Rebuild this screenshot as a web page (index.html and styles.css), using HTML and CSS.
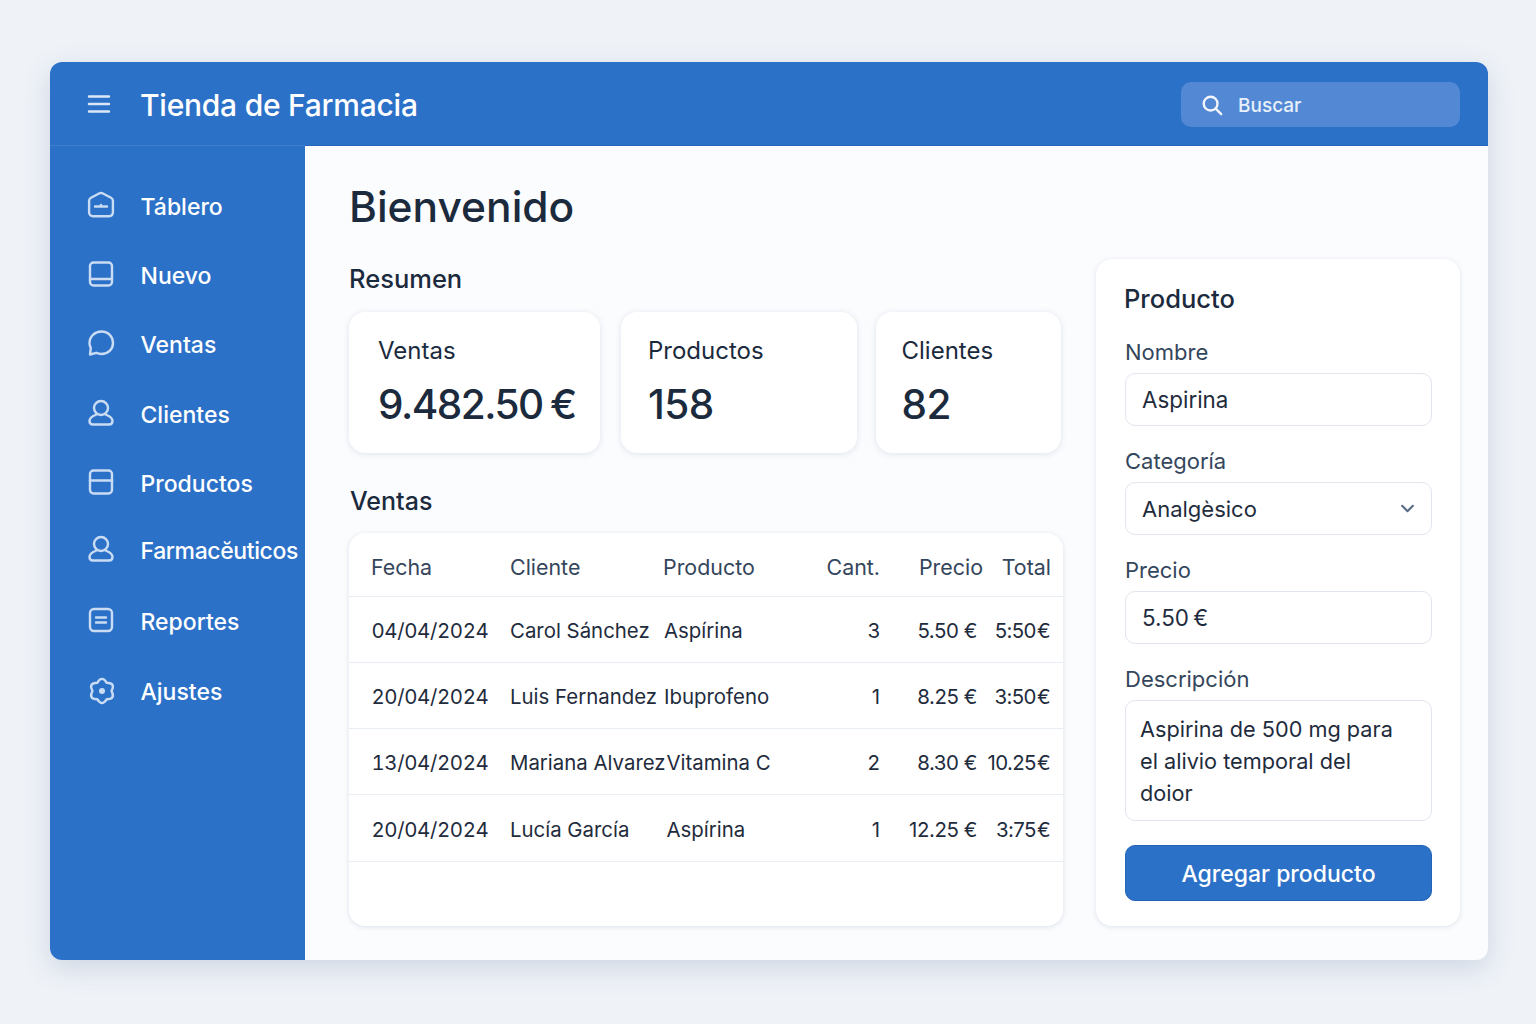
FILE: index.html
```html
<!DOCTYPE html>
<html lang="es">
<head>
    <meta charset="UTF-8">
    <meta name="viewport" content="width=device-width, initial-scale=1.0">
    <title>Tienda de Farmacia</title>
    <link rel="stylesheet" href="styles.css">
</head>
<body>

<div class="app">
    <header class="topbar">
        <svg class="menu-icon" viewBox="0 0 24 24"><path d="M2 4.500h20M2 12h20M2 19.500h20"/></svg>
        <h1>Tienda de Farmacia</h1>
        <div class="search">
            <svg class="search-icon" viewBox="0 0 24 24"><circle cx="10.500" cy="10.500" r="7.500"/><path d="M16 16l6 6"/></svg>
            <span>Buscar</span>
        </div>
    </header>

    <div class="layout">
        <nav class="sidebar">
            <a class="nav-item">
                <svg viewBox="0 0 28 28"><path d="M12.500 2.300c1-.5 2-.5 3 0l8.500 4.400c1.300.7 1.900 1.500 1.900 3v11.600c0 2.400-1.600 3.900-3.900 3.900H6c-2.300 0-3.900-1.500-3.900-3.900V9.700c0-1.500.6-2.300 1.900-3z"/><path d="M8 15.500h12M14 14v1.500"/></svg>
                <span>Táblero</span>
            </a>
            <a class="nav-item">
                <svg viewBox="0 0 28 28"><rect x="3" y="2.500" width="22" height="23" rx="3.500"/><path d="M3 19h22"/></svg>
                <span>Nuevo</span>
            </a>
            <a class="nav-item">
                <svg viewBox="0 0 28 28"><path d="M3 25.500l.8-6.500C2.800 17.400 2.500 15.700 2.500 14 2.500 7.500 7.700 2.500 14.500 2.500S26 7.500 26 14s-5 11-11.500 11c-2 0-3.700-.4-5.200-1.200z"/></svg>
                <span>Ventas</span>
            </a>
            <a class="nav-item">
                <svg viewBox="0 0 28 28"><circle cx="14" cy="9" r="7"/><path d="M9.500 15.500C5.500 17 2.500 19 2.500 22c0 2.300 1.500 3.500 3.500 3.500h16c2 0 3.500-1.200 3.500-3.500 0-3-3-5-7-6.500"/></svg>
                <span>Clientes</span>
            </a>
            <a class="nav-item">
                <svg viewBox="0 0 28 28"><rect x="3" y="2.500" width="22" height="23" rx="3.500"/><path d="M3 12.500h22"/></svg>
                <span>Productos</span>
            </a>
            <a class="nav-item nav-raised">
                <svg viewBox="0 0 28 28"><circle cx="14" cy="9" r="7"/><path d="M9.500 15.500C5.500 17 2.500 19 2.500 22c0 2.300 1.500 3.500 3.500 3.500h16c2 0 3.500-1.200 3.500-3.500 0-3-3-5-7-6.500"/></svg>
                <span class="long-label">Farmacĕuticos</span>
            </a>
            <a class="nav-item">
                <svg viewBox="0 0 28 28"><rect x="3" y="3" width="22" height="22" rx="4"/><path d="M9 11.500h10M9 16.500h10"/></svg>
                <span>Reportes</span>
            </a>
            <a class="nav-item">
                <svg class="gear" viewBox="0 0 28 28"><path d="M18.750 5.770Q14-2 9.250 5.770Q.14 6 4.500 14Q.14 22 9.250 22.230Q14 30 18.750 22.230Q27.860 22 23.500 14Q27.860 6 18.750 5.770z"/><circle class="dot" cx="14" cy="14" r="3"/></svg>
                <span>Ajustes</span>
            </a>
        </nav>

        <main class="content">
            <h2 class="page-title">Bienvenido</h2>

            <div class="columns">
                <div class="left-col">
                    <h3 class="section-title">Resumen</h3>
                    <div class="stats">
                        <div class="stat-card stat-sales">
                            <p>Ventas</p>
                            <strong>9.482.50 €</strong>
                        </div>
                        <div class="stat-card stat-products">
                            <p>Productos</p>
                            <strong>158</strong>
                        </div>
                        <div class="stat-card stat-clients">
                            <p>Clientes</p>
                            <strong>82</strong>
                        </div>
                    </div>

                    <h3 class="section-title sales-title">Ventas</h3>
                    <div class="table-card">
                        <table>
                            <thead>
                                <tr>
                                    <th class="col-date">Fecha</th>
                                    <th class="col-client">Cliente</th>
                                    <th class="col-product">Producto</th>
                                    <th class="col-qty num">Cant.</th>
                                    <th class="col-price num">Precio</th>
                                    <th class="col-total num">Total</th>
                                </tr>
                            </thead>
                            <tbody>
                                <tr>
                                    <td>04/04/2024</td>
                                    <td>Carol Sánchez</td>
                                    <td class="product">Aspírina</td>
                                    <td class="num">3</td>
                                    <td class="num price">5.50 €</td>
                                    <td class="num total">5:50 €</td>
                                </tr>
                                <tr>
                                    <td>20/04/2024</td>
                                    <td>Luis Fernandez</td>
                                    <td class="product">Ibuprofeno</td>
                                    <td class="num">1</td>
                                    <td class="num price">8.25 €</td>
                                    <td class="num total">3:50 €</td>
                                </tr>
                                <tr>
                                    <td>13/04/2024</td>
                                    <td>Mariana Alvarez</td>
                                    <td class="product shifted">Vitamina C</td>
                                    <td class="num">2</td>
                                    <td class="num price">8.30 €</td>
                                    <td class="num total">10.25 €</td>
                                </tr>
                                <tr>
                                    <td>20/04/2024</td>
                                    <td>Lucía García</td>
                                    <td class="product shifted">Aspírina</td>
                                    <td class="num">1</td>
                                    <td class="num price">12.25 €</td>
                                    <td class="num total">3:75 €</td>
                                </tr>
                            </tbody>
                        </table>
                    </div>
                </div>

                <form class="product-card">
                    <h3 class="section-title">Producto</h3>

                    <div class="field-label">Nombre</div>
                    <div class="field">Aspirina</div>

                    <div class="field-label">Categoría</div>
                    <div class="field field-select">
                        <span>Analgèsico</span>
                        <svg viewBox="0 0 14 14"><path d="M2 4.500l5 5 5-5"/></svg>
                    </div>

                    <div class="field-label">Precio</div>
                    <div class="field field-price">5.50 €</div>

                    <div class="field-label">Descripción</div>
                    <div class="field field-area">Aspirina de 500 mg para el alivio temporal del doior</div>

                    <button type="button">Agregar producto</button>
                </form>
            </div>
        </main>
    </div>
</div>

</body>
</html>
```

FILE: styles.css
```css
* {
    box-sizing: border-box;
}

body {
    margin: 0;
    height: 1024px;
    padding: 62px 48px 64px 50px;
    background-color: #eff3f8;
    font-family: Inter, "Noto Sans", sans-serif;
    color: #1b2a3d;
    overflow: hidden;
}

.app {
    height: 898px;
    display: flex;
    flex-direction: column;
    border-radius: 12px;
    overflow: hidden;
    background-color: #fbfcfe;
    box-shadow: 0 8px 28px rgba(60, 85, 125, 0.18);
}

/* top bar */
.topbar {
    flex: none;
    height: 84px;
    display: flex;
    align-items: center;
    padding: 0 28px 0 37px;
    background-color: #2c71c8;
    border-bottom: 1px solid #2765ba;
    color: #fff;
}

.menu-icon {
    width: 24px;
    height: 24px;
    fill: none;
    stroke: #dbe7f7;
    stroke-width: 2.400;
    stroke-linecap: round;
}

.topbar h1 {
    margin: 2px 0 0 29px;
    font-size: 30px;
    font-weight: 500;
    letter-spacing: -0.25px;
}

.search {
    margin: 2px 0 0 auto;
    width: 279px;
    height: 45px;
    display: flex;
    align-items: center;
    gap: 15px;
    padding-left: 20px;
    border-radius: 10px;
    background-color: #5288d4;
    font-size: 19px;
    font-weight: 500;
    color: #e8f0fa;
}

.search span {
    margin-top: 2px;
}

.search-icon {
    width: 22px;
    height: 22px;
    fill: none;
    stroke: #f2f6fc;
    stroke-width: 2.600;
    stroke-linecap: round;
}

.layout {
    flex: 1;
    display: flex;
    min-height: 0;
}

/* sidebar */
.sidebar {
    flex: none;
    width: 255px;
    margin-top: -1px;
    padding-top: 25px;
    background-color: #2c71c8;
    border-top: 1px solid #3f7fce;
}

.nav-item {
    height: 69.300px;
    display: flex;
    align-items: center;
    gap: 25.500px;
    padding-left: 37px;
    font-size: 23px;
    font-weight: 500;
    color: #fff;
    white-space: nowrap;
}

.nav-item span {
    margin-top: 2px;
}

.nav-item svg {
    flex: none;
    width: 28px;
    height: 28px;
    margin-top: -2px;
    fill: none;
    stroke: #c9dcf4;
    stroke-width: 2.400;
    stroke-linejoin: round;
    stroke-linecap: round;
}

.nav-item .gear {
    margin-left: 1px;
    margin-right: -1px;
    margin-top: 0;
}

.nav-item .dot {
    fill: #c9dcf4;
    stroke: none;
}

.nav-raised {
    margin: -2px 0 2px;
}

.long-label {
    letter-spacing: -0.4px;
}

/* main area */
.content {
    flex: 1;
    min-width: 0;
    padding: 30px 28px 34px 44px;
    display: flex;
    flex-direction: column;
}

.page-title {
    margin: 0;
    height: 83px;
    font-size: 42.500px;
    font-weight: 500;
    line-height: 62px;
    color: #1b2a3d;
}

.columns {
    flex: 1;
    display: flex;
    justify-content: space-between;
}

.left-col {
    width: 714px;
    display: flex;
    flex-direction: column;
}

.section-title {
    margin: 0;
    font-size: 25.500px;
    font-weight: 500;
    line-height: 40px;
    color: #1b2a3d;
}

.stats {
    margin-top: 13px;
    display: flex;
    gap: 21px;
}

.stat-card {
    height: 141px;
    padding: 24px 0 0 29px;
    background-color: #fff;
    border-radius: 16px;
    box-shadow: 0 1px 6px rgba(70, 95, 135, 0.16);
}

.stat-sales { width: 251px; }
.stat-products { width: 236px; padding-left: 27px; }
.stat-clients { width: 185px; margin-left: -2px; padding-left: 25.500px; }

.stat-card p {
    margin: 0;
    font-size: 24px;
    font-weight: 400;
    line-height: 30px;
}

.stat-card strong {
    display: block;
    margin-top: 13px;
    font-size: 40.500px;
    font-weight: 500;
    line-height: 52px;
    letter-spacing: -0.5px;
}

.stat-sales strong {
    letter-spacing: -1.5px;
    word-spacing: -2px;
}

.sales-title {
    margin-top: 28px;
    margin-left: 1px;
    font-size: 25px;
}

/* table */
.table-card {
    flex: 1;
    margin-top: 12px;
    background-color: #fff;
    border-radius: 16px;
    box-shadow: 0 1px 5px rgba(70, 95, 135, 0.18);
    overflow: hidden;
}

table {
    width: 100%;
    table-layout: fixed;
    border-collapse: collapse;
}

th, td {
    padding: 0;
    text-align: left;
    white-space: nowrap;
    border-bottom: 1px solid #e8edf4;
}

th {
    height: 63px;
    padding-top: 5px;
    font-size: 21.400px;
    font-weight: 400;
    color: #34465c;
}

td {
    height: 66.300px;
    padding-top: 2px;
    font-size: 20.400px;
    color: #1f2c3d;
}

.col-date { width: 161px; padding-left: 22px; }
.col-client { width: 153px; }
.col-product { width: 120px; }
.col-qty { width: 97px; }
.col-price { width: 103px; }
.col-total { width: 80px; padding-right: 12px; }

td:first-child {
    padding-left: 22.500px;
    font-variant-numeric: tabular-nums;
    letter-spacing: -0.35px;
}

td.product {
    padding-left: 1px;
}

td.shifted {
    padding-left: 3.500px;
}

td.price {
    padding-right: 6px;
    letter-spacing: -0.4px;
}

td.total {
    padding-right: 13px;
    word-spacing: -4px;
    letter-spacing: -0.6px;
}

.num {
    text-align: right;
}

/* product form */
.product-card {
    width: 364px;
    padding: 20px 28px 24px 29px;
    background-color: #fff;
    border-radius: 16px;
    box-shadow: 0 1px 5px rgba(70, 95, 135, 0.16);
}

.product-card .section-title {
    margin-left: -1px;
}

.field-label {
    margin: 20px 0 6px;
    font-size: 22px;
    line-height: 30px;
    color: #34465c;
}

.product-card .section-title + .field-label {
    margin-top: 18px;
}

.field {
    height: 53px;
    display: flex;
    align-items: center;
    padding: 0 16px;
    background-color: #fff;
    border: 1px solid #e1e6ee;
    border-radius: 10px;
    font-size: 22.400px;
    color: #1f2c3d;
}

.field-select {
    justify-content: space-between;
    font-size: 22px;
}

.field-price {
    word-spacing: -2px;
}

.field-select svg {
    width: 15px;
    height: 15px;
    fill: none;
    stroke: #5b6e86;
    stroke-width: 2;
    stroke-linecap: round;
    stroke-linejoin: round;
}

.field-area {
    display: block;
    height: 121px;
    padding: 12px 36px 12px 14px;
    font-size: 21.700px;
    line-height: 32px;
}

button {
    width: 100%;
    height: 56px;
    margin-top: 24px;
    padding-top: 2px;
    background-color: #2c71c8;
    border: 1px solid #2362b4;
    border-radius: 10px;
    font-family: inherit;
    font-size: 23px;
    font-weight: 500;
    color: #fff;
}
```
